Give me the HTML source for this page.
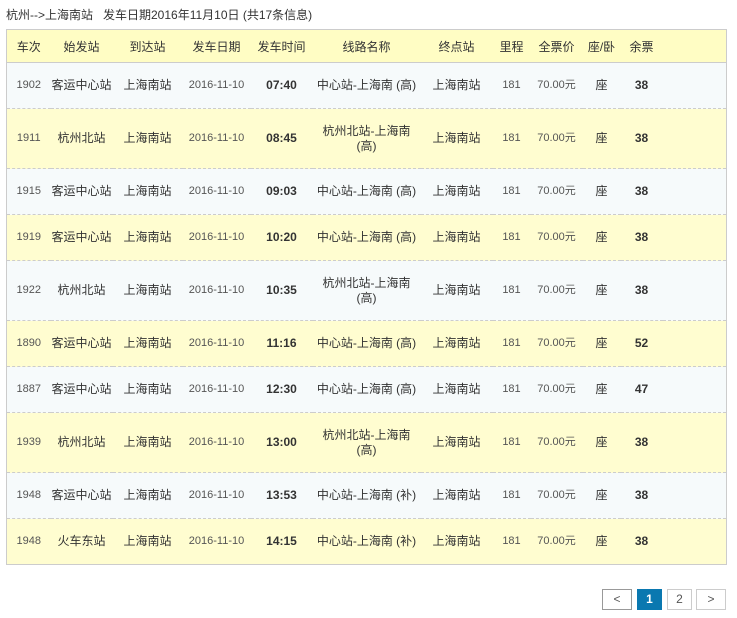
<!DOCTYPE html>
<html><head><meta charset="utf-8"><style>
body{margin:0;background:#fff;font-family:"Liberation Sans","Noto Sans CJK SC",sans-serif;font-size:12px;color:#333;width:737px;height:618px;overflow:hidden;position:relative}
.title{position:absolute;left:6px;top:6px;font-size:12px;color:#333;white-space:pre}
table{position:absolute;left:6px;top:29px;width:721px;border-collapse:collapse;table-layout:fixed;border:1px solid #ccc}
th{height:32px;background:#fffdc4;font-weight:normal;color:#333;border-bottom:1px solid #ccc;text-align:center;padding:0;white-space:nowrap}
td{text-align:center;border-bottom:1px dashed #ccc;padding:0;line-height:15px;white-space:nowrap;overflow:visible}
td.r{white-space:normal;padding:0 4px}
tr.a td{background:#f6fafb}
tr.b td{background:#fffdd0}
tr:last-child td{border-bottom:none}
.h1{height:46px}.h2{height:60px}
b{font-weight:bold;color:#333}
.n{color:#555;font-size:11px}
.pg{position:absolute;top:589px;height:21px;border:1px solid #ccc;box-sizing:border-box;text-align:center;line-height:19px;font-size:12px;color:#555;background:#fff}
</style></head><body>
<div class="title">杭州-->上海南站   发车日期2016年11月10日 (共17条信息)</div>
<table>
<colgroup><col style="width:44px"><col style="width:62px"><col style="width:70px"><col style="width:68px"><col style="width:62px"><col style="width:108px"><col style="width:72px"><col style="width:38px"><col style="width:52px"><col style="width:38px"><col style="width:42px"><col></colgroup>
<tr><th>车次</th><th>始发站</th><th>到达站</th><th>发车日期</th><th>发车时间</th><th>线路名称</th><th>终点站</th><th>里程</th><th>全票价</th><th>座/卧</th><th>余票</th><th></th></tr>
<tr class="a h1"><td class="n">1902</td><td>客运中心站</td><td>上海南站</td><td class="n">2016-11-10</td><td><b>07:40</b></td><td class="r">中心站-上海南 (高)</td><td>上海南站</td><td class="n">181</td><td class="n">70.00元</td><td>座</td><td><b>38</b></td><td></td></tr>
<tr class="b h2"><td class="n">1911</td><td>杭州北站</td><td>上海南站</td><td class="n">2016-11-10</td><td><b>08:45</b></td><td class="r">杭州北站-上海南 (高)</td><td>上海南站</td><td class="n">181</td><td class="n">70.00元</td><td>座</td><td><b>38</b></td><td></td></tr>
<tr class="a h1"><td class="n">1915</td><td>客运中心站</td><td>上海南站</td><td class="n">2016-11-10</td><td><b>09:03</b></td><td class="r">中心站-上海南 (高)</td><td>上海南站</td><td class="n">181</td><td class="n">70.00元</td><td>座</td><td><b>38</b></td><td></td></tr>
<tr class="b h1"><td class="n">1919</td><td>客运中心站</td><td>上海南站</td><td class="n">2016-11-10</td><td><b>10:20</b></td><td class="r">中心站-上海南 (高)</td><td>上海南站</td><td class="n">181</td><td class="n">70.00元</td><td>座</td><td><b>38</b></td><td></td></tr>
<tr class="a h2"><td class="n">1922</td><td>杭州北站</td><td>上海南站</td><td class="n">2016-11-10</td><td><b>10:35</b></td><td class="r">杭州北站-上海南 (高)</td><td>上海南站</td><td class="n">181</td><td class="n">70.00元</td><td>座</td><td><b>38</b></td><td></td></tr>
<tr class="b h1"><td class="n">1890</td><td>客运中心站</td><td>上海南站</td><td class="n">2016-11-10</td><td><b>11:16</b></td><td class="r">中心站-上海南 (高)</td><td>上海南站</td><td class="n">181</td><td class="n">70.00元</td><td>座</td><td><b>52</b></td><td></td></tr>
<tr class="a h1"><td class="n">1887</td><td>客运中心站</td><td>上海南站</td><td class="n">2016-11-10</td><td><b>12:30</b></td><td class="r">中心站-上海南 (高)</td><td>上海南站</td><td class="n">181</td><td class="n">70.00元</td><td>座</td><td><b>47</b></td><td></td></tr>
<tr class="b h2"><td class="n">1939</td><td>杭州北站</td><td>上海南站</td><td class="n">2016-11-10</td><td><b>13:00</b></td><td class="r">杭州北站-上海南 (高)</td><td>上海南站</td><td class="n">181</td><td class="n">70.00元</td><td>座</td><td><b>38</b></td><td></td></tr>
<tr class="a h1"><td class="n">1948</td><td>客运中心站</td><td>上海南站</td><td class="n">2016-11-10</td><td><b>13:53</b></td><td class="r">中心站-上海南 (补)</td><td>上海南站</td><td class="n">181</td><td class="n">70.00元</td><td>座</td><td><b>38</b></td><td></td></tr>
<tr class="b h1"><td class="n">1948</td><td>火车东站</td><td>上海南站</td><td class="n">2016-11-10</td><td><b>14:15</b></td><td class="r">中心站-上海南 (补)</td><td>上海南站</td><td class="n">181</td><td class="n">70.00元</td><td>座</td><td><b>38</b></td><td></td></tr>
</table>
<div class="pg" style="left:602px;width:30px;border-color:#999">&lt;</div>
<div class="pg" style="left:637px;width:25px;background:#0a78b0;border-color:#0a78b0;color:#fff;font-weight:bold">1</div>
<div class="pg" style="left:667px;width:25px">2</div>
<div class="pg" style="left:696px;width:30px">&gt;</div>
</body></html>
